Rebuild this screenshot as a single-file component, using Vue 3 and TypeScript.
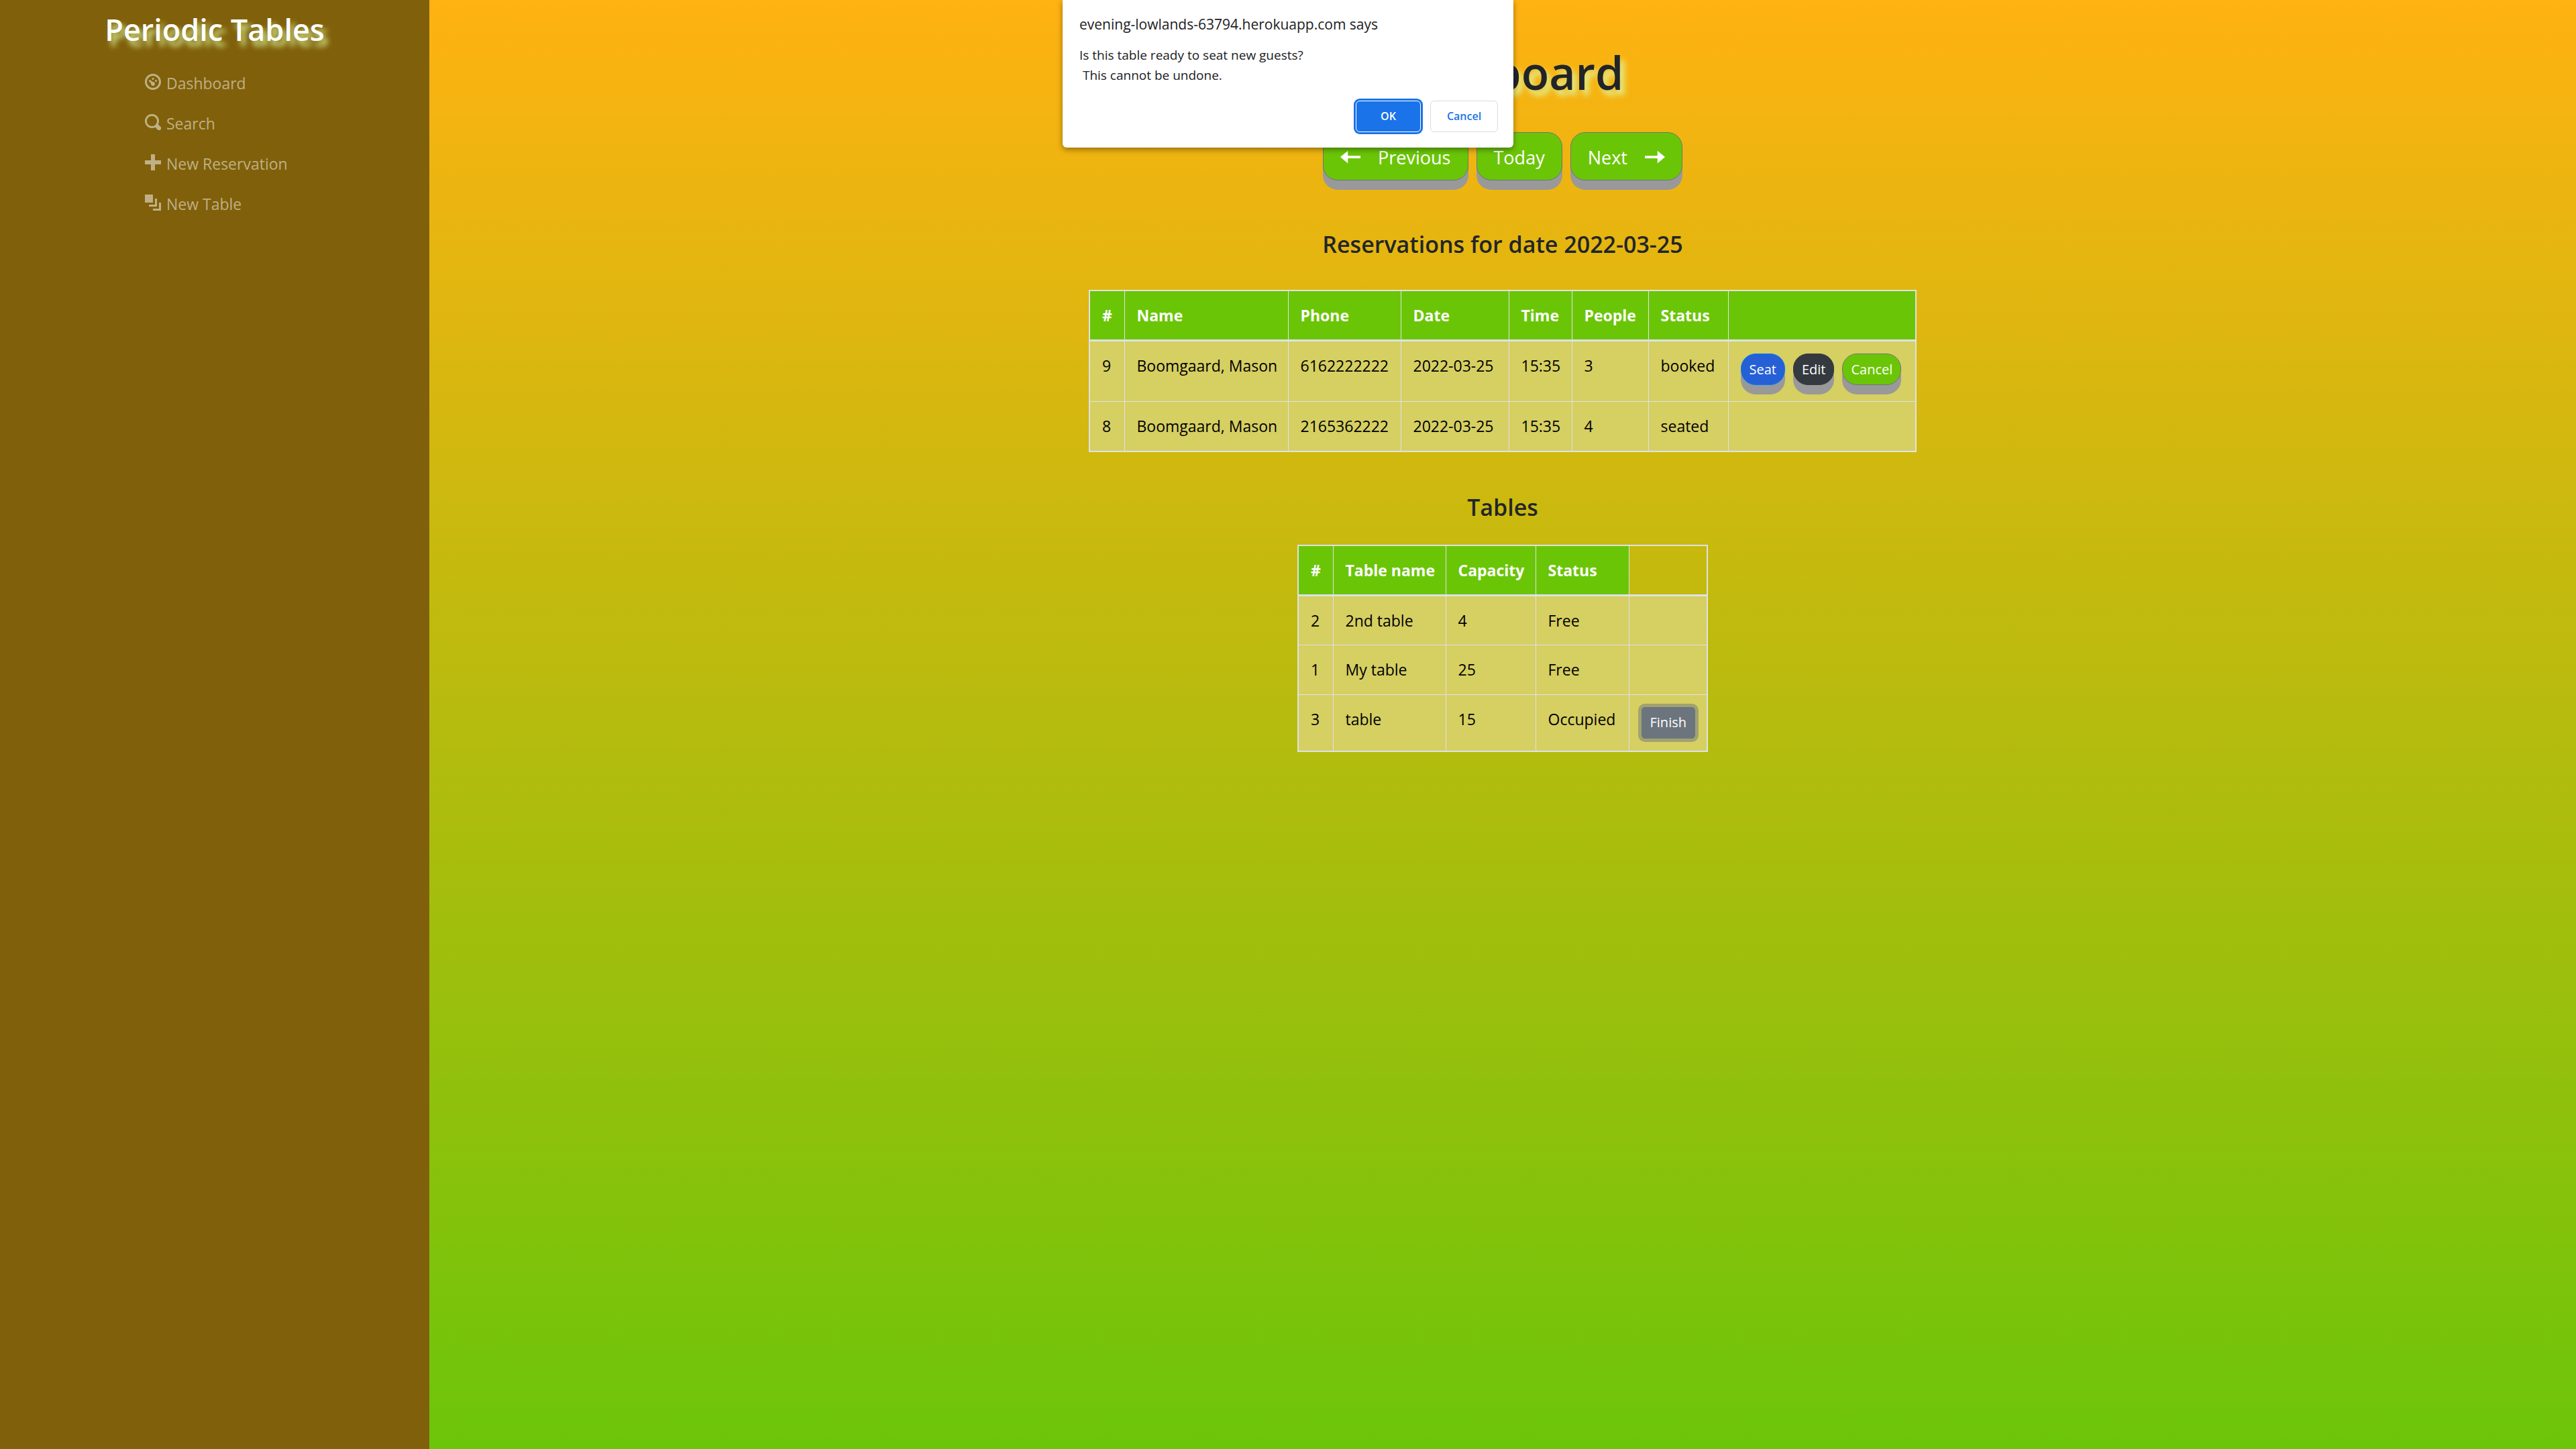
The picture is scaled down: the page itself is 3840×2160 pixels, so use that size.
<script setup lang="ts">
interface NavItem {
  label: string
  icon: string
}
interface Reservation {
  id: number
  name: string
  phone: string
  date: string
  time: string
  people: number
  status: string
}
interface DiningTable {
  id: number
  name: string
  capacity: number
  status: string
}

const nav: NavItem[] = [
  {
    label: 'Dashboard',
    icon: 'M4 0c-2.2 0-4 1.8-4 4s1.8 4 4 4 4-1.8 4-4-1.8-4-4-4zm0 1c1.66 0 3 1.34 3 3s-1.34 3-3 3-3-1.34-3-3 1.34-3 3-3zm0 1c-.28 0-.5.22-.5.5s.22.5.5.5.5-.22.5-.5-.22-.5-.5-.5zm-1.66 1a.5.5 0 0 0-.19.84l.91.91c-.02.08-.06.16-.06.25 0 .55.45 1 1 1s1-.45 1-1-.45-1-1-1c-.09 0-.17.04-.25.06l-.91-.91a.5.5 0 0 0-.44-.16.5.5 0 0 0-.06 0zm3.16 0c-.28 0-.5.22-.5.5s.22.5.5.5.5-.22.5-.5-.22-.5-.5-.5z',
  },
  {
    label: 'Search',
    icon: 'M3.5 0c-1.93 0-3.5 1.57-3.5 3.5s1.57 3.5 3.5 3.5c.59 0 1.17-.14 1.66-.41a1 1 0 0 0 .13.13l1 1a1.02 1.02 0 1 0 1.44-1.44l-1-1a1 1 0 0 0-.16-.13c.27-.49.44-1.06.44-1.66 0-1.93-1.55-3.5-3.5-3.5zm0 1c1.39 0 2.5 1.11 2.5 2.5 0 .66-.24 1.27-.66 1.72-.01.01-.02.02-.03.03a1 1 0 0 0-.13.13c-.44.4-1.04.63-1.69.63-1.39 0-2.5-1.11-2.5-2.5s1.11-2.5 2.5-2.5z',
  },
  { label: 'New Reservation', icon: 'M3 0v3h-3v2h3v3h2v-3h3v-2h-3v-3h-2z' },
  { label: 'New Table', icon: 'M0 0v4h4v-4h-4zm5 2v3h-3v1h4v-4h-1zm2 2v3h-3v1h4v-4h-1z' },
]

const date = '2022-03-25'
const reservations: Reservation[] = [
  { id: 9, name: 'Boomgaard, Mason', phone: '6162222222', date, time: '15:35', people: 3, status: 'booked' },
  { id: 8, name: 'Boomgaard, Mason', phone: '2165362222', date, time: '15:35', people: 4, status: 'seated' },
]
const tables: DiningTable[] = [
  { id: 2, name: '2nd table', capacity: 4, status: 'Free' },
  { id: 1, name: 'My table', capacity: 25, status: 'Free' },
  { id: 3, name: 'table', capacity: 15, status: 'Occupied' },
]

const reservationColumns = [
  { title: '#', width: 52 },
  { title: 'Name', width: 244 },
  { title: 'Phone', width: 168 },
  { title: 'Date', width: 161 },
  { title: 'Time', width: 94 },
  { title: 'People', width: 114 },
  { title: 'Status', width: 119 },
]
const tableColumns = [
  { title: '#', width: 52 },
  { title: 'Table name', width: 168 },
  { title: 'Capacity', width: 134 },
  { title: 'Status', width: 139 },
]
</script>

<template>
  <div class="page">
    <nav class="sidebar">
      <a href="#" class="brand">Periodic Tables</a>
      <ul class="menu">
        <li v-for="item in nav" :key="item.label">
          <a href="#" class="menu-link">
            <svg class="menu-icon" viewBox="0 0 8 8" aria-hidden="true"><path :d="item.icon" /></svg>
            <span>{{ item.label }}</span>
          </a>
        </li>
      </ul>
    </nav>

    <main class="main">
      <h1>Dashboard</h1>
      <div class="pager">
        <button type="button" class="pill large">
          <svg class="arrow" viewBox="0 0 8 8" aria-hidden="true"><path d="M3 1.5l-3 2.53 3 2.47v-2h5v-1h-5v-2z" /></svg>
          <span>Previous</span>
        </button>
        <button type="button" class="pill large">Today</button>
        <button type="button" class="pill large">
          <span>Next</span>
          <svg class="arrow" viewBox="0 0 8 8" aria-hidden="true"><path d="M5 1.5v2h-5v1h5v2l3-2.53-3-2.47z" /></svg>
        </button>
      </div>

      <h2 class="reservations-title">Reservations for date {{ date }}</h2>
      <table>
        <colgroup>
          <col v-for="c in reservationColumns" :key="c.title" :style="{ width: c.width + 'px' }" />
          <col class="actions-col" />
        </colgroup>
        <thead>
          <tr>
            <th v-for="c in reservationColumns" :key="c.title" scope="col">{{ c.title }}</th>
            <th></th>
          </tr>
        </thead>
        <tbody>
          <tr v-for="r in reservations" :key="r.id">
            <td>{{ r.id }}</td>
            <td>{{ r.name }}</td>
            <td>{{ r.phone }}</td>
            <td>{{ r.date }}</td>
            <td>{{ r.time }}</td>
            <td>{{ r.people }}</td>
            <td>{{ r.status }}</td>
            <td>
              <div v-if="r.status === 'booked'" class="actions">
                <button type="button" class="pill small seat">Seat</button>
                <button type="button" class="pill small edit">Edit</button>
                <button type="button" class="pill small">Cancel</button>
              </div>
            </td>
          </tr>
        </tbody>
      </table>

      <h2 class="tables-title">Tables</h2>
      <table>
        <colgroup>
          <col v-for="c in tableColumns" :key="c.title" :style="{ width: c.width + 'px' }" />
          <col class="finish-col" />
        </colgroup>
        <thead>
          <tr>
            <th v-for="c in tableColumns" :key="c.title" scope="col">{{ c.title }}</th>
            <td class="blank"></td>
          </tr>
        </thead>
        <tbody>
          <tr v-for="t in tables" :key="t.id">
            <td>{{ t.id }}</td>
            <td>{{ t.name }}</td>
            <td>{{ t.capacity }}</td>
            <td>{{ t.status }}</td>
            <td>
              <button v-if="t.status === 'Occupied'" type="button" class="finish">Finish</button>
            </td>
          </tr>
        </tbody>
      </table>
    </main>

    <dialog open class="confirm" aria-labelledby="confirm-title">
      <h3 id="confirm-title" class="confirm-title">evening-lowlands-63794.herokuapp.com says</h3>
      <p class="confirm-text">{{ 'Is this table ready to seat new guests?\n This cannot be undone.' }}</p>
      <div class="confirm-actions">
        <button type="button" class="ok">OK</button>
        <button type="button" class="dismiss">Cancel</button>
      </div>
    </dialog>
  </div>
</template>

<style>
body {
  margin: 0;
}
</style>

<style scoped>
.page {
  position: relative;
  display: flex;
  min-height: 100vh;
  font-family: 'Open Sans', 'Noto Sans', sans-serif;
  font-size: 23px;
  line-height: 36px;
  color: #212529;
}
* {
  box-sizing: border-box;
}
button {
  font-family: inherit;
  cursor: pointer;
}

.sidebar {
  display: flex;
  flex-direction: column;
  align-items: center;
  flex: 0 0 16.6667%;
  background: #80600a;
}
.brand {
  margin-top: 14px;
  font-size: 45px;
  line-height: 60px;
  font-weight: 600;
  color: #fff;
  text-decoration: none;
  text-shadow: 6px 8px 8px #d9f296;
}
.menu {
  align-self: stretch;
  list-style: none;
  margin: 20px 0 0;
  padding: 0 0 0 216px;
}
.menu-link {
  display: flex;
  align-items: flex-start;
  gap: 8px;
  height: 60px;
  padding-top: 12px;
  color: rgba(255, 255, 255, 0.5);
  text-decoration: none;
}
.menu-icon {
  width: 24px;
  height: 24px;
  margin-top: 4px;
  fill: currentColor;
}

.main {
  display: flex;
  flex-direction: column;
  align-items: center;
  flex: 1;
  padding-bottom: 48px;
  background: linear-gradient(#ffb211, #6cc50a);
}
h1,
h2 {
  margin: 0;
  font-weight: 600;
}
h1 {
  margin-top: 65px;
  font-size: 68px;
  line-height: 86px;
  text-shadow: 6px 8px 8px #dff296;
}
.pager {
  display: flex;
  gap: 12px;
  margin-top: 46px;
}
.pill {
  display: flex;
  align-items: center;
  border: 1px solid #6c757d;
  border-radius: 22px;
  background: #6bc507;
  color: #fff;
  box-shadow: 0 14px #999;
}
.large {
  gap: 26px;
  height: 72px;
  padding: 2px 25px 0;
  font-size: 27px;
  line-height: 45px;
}
.arrow {
  width: 30px;
  height: 30px;
  fill: currentColor;
}
.small {
  height: 47px;
  padding: 0 12px;
  font-size: 20px;
  line-height: 32px;
}
.seat {
  border-color: #007bff;
  background: #2560d6;
}
.edit {
  border-color: #343a40;
  background: #343a40;
}
h2 {
  font-size: 34px;
  line-height: 44px;
}
.reservations-title {
  margin-top: 73px;
  margin-bottom: 46px;
}
.tables-title {
  margin-top: 60px;
  margin-bottom: 34px;
}

table {
  border-collapse: collapse;
  border: 2px solid #dee2e6;
}
th,
td {
  height: 74px;
  padding: 18px 12px 18px 18px;
  border: 1px solid #dee2e6;
  text-align: left;
  vertical-align: top;
  white-space: nowrap;
}
td {
  background: #d6cf62;
  color: #000;
}
th {
  background: #6bc507;
  color: #fff;
  font-weight: 700;
}
thead th,
thead td {
  border-bottom-width: 3px;
}
.blank {
  background: transparent;
}
.actions-col {
  width: 280px;
}
.finish-col {
  width: 117px;
}
.actions {
  display: flex;
  gap: 12px;
  height: 53px;
}
.finish {
  display: block;
  height: 47px;
  padding: 0 12px;
  border: 1px solid #6c757d;
  border-radius: 5px;
  background: #6c757d;
  color: #fff;
  font-size: 20px;
  line-height: 32px;
  box-shadow: 0 0 0 5px rgba(108, 117, 125, 0.5);
}

.confirm {
  position: absolute;
  top: 0;
  left: 50%;
  transform: translateX(-50%);
  width: 672px;
  margin: 0;
  padding: 20px 23px 23px 25px;
  border: 0;
  border-radius: 0 0 6px 6px;
  background: #fff;
  color: #202124;
  box-shadow: 0 3px 8px rgba(0, 0, 0, 0.4);
}
.confirm-title {
  margin: 0;
  font-size: 21px;
  font-weight: 400;
  line-height: 32px;
}
.confirm-text {
  margin: 15px 0 0;
  font-size: 19px;
  line-height: 30px;
  white-space: pre;
}
.confirm-actions {
  display: flex;
  justify-content: flex-end;
  gap: 14px;
  margin-top: 23px;
}
.confirm-actions button {
  height: 47px;
  padding: 0 0 2px;
  border-radius: 6px;
  font-size: 16px;
  font-weight: 600;
}
.confirm-actions .ok {
  width: 97px;
  border: 1px solid #fff;
  background: #1a73e8;
  color: #fff;
  box-shadow: 0 0 0 3px #1a73e8;
}
.dismiss {
  width: 101px;
  border: 1px solid #dadce0;
  background: #fff;
  color: #1a73e8;
}
</style>
